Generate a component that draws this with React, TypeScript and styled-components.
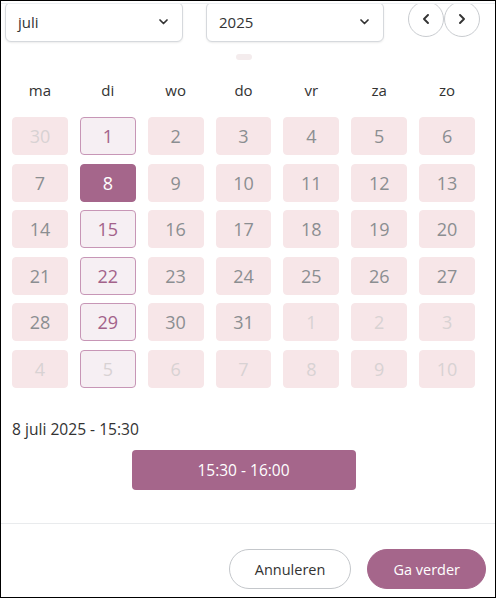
import React from "react";
import styled, { createGlobalStyle } from "styled-components";

const PURPLE = "#a5668b";

const GlobalStyle = createGlobalStyle`
  html, body {
    margin: 0;
    padding: 0;
    background: #ffffff;
  }
  body {
    font-family: "Open Sans", "DejaVu Sans", sans-serif;
    color: #333333;
  }
  * {
    box-sizing: border-box;
  }
`;

const Frame = styled.div`
  width: 496px;
  height: 598px;
  border: 1px solid #000000;
  background: #ffffff;
  display: flex;
  flex-direction: column;
  overflow: hidden;
`;

const TopRule = styled.div`
  flex: 0 0 auto;
  height: 3px;
  border-bottom: 1px solid #eceff2;
  position: relative;
  z-index: 2;
  background: #ffffff;
`;

const Body = styled.div`
  flex: 1;
  overflow: hidden;
`;

const Toolbar = styled.div`
  display: flex;
  align-items: flex-start;
  gap: 23px;
  margin-top: -2px;
  padding: 0 15px 0 4px;
`;

const Select = styled.div`
  width: 178px;
  height: 40px;
  border: 1px solid #d6d9dd;
  border-radius: 6px;
  box-shadow: 0 1px 2px rgba(0, 0, 0, 0.08);
  display: flex;
  align-items: center;
  justify-content: space-between;
  padding: 0 14px 0 12px;
  font-size: 15px;
  color: #333333;
  background: #ffffff;
`;

const NavGroup = styled.div`
  display: flex;
  margin-top: -1px;
  margin-left: 1px;
`;

const NavButton = styled.button`
  width: 36px;
  height: 36px;
  border-radius: 50%;
  border: 1px solid #c9ccd0;
  background: #ffffff;
  display: flex;
  align-items: center;
  justify-content: center;
  padding: 0;
  margin: 0;
  cursor: pointer;
`;

const Content = styled.div`
  padding: 0 20px 0 11px;
`;

const ScrollPill = styled.div`
  width: 16px;
  height: 6px;
  border-radius: 3px;
  background: #f4eced;
  margin: 12px auto 0;
`;

const Weekdays = styled.div`
  display: grid;
  grid-template-columns: repeat(7, 1fr);
  column-gap: 12px;
  margin-top: 19px;
  font-size: 15px;
  line-height: 22px;
  color: #333333;
  text-align: center;
`;

const DayGrid = styled.div`
  display: grid;
  grid-template-columns: repeat(7, 1fr);
  grid-auto-rows: 38px;
  gap: 8.5px 12px;
  margin-top: 16px;
`;

type DayKind = "normal" | "out" | "open" | "openOut" | "selected";

const Day = styled.div<{ $kind: DayKind }>`
  display: flex;
  align-items: center;
  justify-content: center;
  border-radius: 4px;
  font-size: 18px;
  background: ${(p) =>
    p.$kind === "selected"
      ? PURPLE
      : p.$kind === "open" || p.$kind === "openOut"
      ? "#f6eff3"
      : "#f7e6e8"};
  border: 1px solid
    ${(p) =>
      p.$kind === "selected"
        ? PURPLE
        : p.$kind === "open" || p.$kind === "openOut"
        ? "#c796b6"
        : "#f7e6e8"};
  color: ${(p) =>
    p.$kind === "selected"
      ? "#ffffff"
      : p.$kind === "open"
      ? "#a3628a"
      : p.$kind === "out" || p.$kind === "openOut"
      ? "#d8d2d3"
      : "#8b8e91"};
`;

const DateLabel = styled.div`
  margin-top: 30px;
  font-size: 15.6px;
  line-height: 22px;
  color: #333333;
`;

const SlotRow = styled.div`
  display: flex;
  justify-content: center;
  margin-top: 10px;
`;

const Slot = styled.button`
  width: 224px;
  height: 40px;
  border: none;
  border-radius: 4px;
  background: ${PURPLE};
  color: #ffffff;
  font-family: "Open Sans", sans-serif;
  font-size: 15.5px;
  cursor: pointer;
`;

const Footer = styled.div`
  flex: 0 0 auto;
  border-top: 1px solid #e9ebed;
  display: flex;
  justify-content: flex-end;
  gap: 16px;
  padding: 25px 9px 8px 0;
`;

const PillButton = styled.button<{ $primary?: boolean }>`
  height: 40px;
  padding: 0 25px;
  border-radius: 20px;
  border: 1px solid ${(p) => (p.$primary ? PURPLE : "#c4c7cb")};
  background: ${(p) => (p.$primary ? PURPLE : "#ffffff")};
  color: ${(p) => (p.$primary ? "#ffffff" : "#333333")};
  font-family: "Open Sans", sans-serif;
  font-size: 14.5px;
  cursor: pointer;
`;

const ChevronDown = () => (
  <svg width="9" height="6" viewBox="0 0 9 6" fill="none">
    <path d="M1 1l3.5 3.5L8 1" stroke="#333" strokeWidth="1.7" strokeLinecap="round" strokeLinejoin="round" />
  </svg>
);

const Chevron = ({ dir }: { dir: "left" | "right" }) => (
  <svg width="6" height="10" viewBox="0 0 6 10" fill="none">
    <path
      d={dir === "left" ? "M5 1L1 5l4 4" : "M1 1l4 4-4 4"}
      stroke="#333"
      strokeWidth="1.9"
      strokeLinecap="round"
      strokeLinejoin="round"
    />
  </svg>
);

const weekdays = ["ma", "di", "wo", "do", "vr", "za", "zo"];

type Cell = { n: number; kind: DayKind };

const buildDays = (): Cell[] => {
  const cells: Cell[] = [{ n: 30, kind: "out" }];
  for (let d = 1; d <= 31; d++) cells.push({ n: d, kind: "normal" });
  for (let d = 1; d <= 10; d++) cells.push({ n: d, kind: "out" });
  return cells.map((c, i) => {
    if (i % 7 !== 1) return c;
    if (c.n === 8 && c.kind === "normal") return { ...c, kind: "selected" };
    return { ...c, kind: c.kind === "out" ? "openOut" : "open" };
  });
};

const App = () => {
  const days = buildDays();

  return (
    <>
      <GlobalStyle />
      <Frame>
        <TopRule />
        <Body>
          <Toolbar>
            <Select>
              <span>juli</span>
              <ChevronDown />
            </Select>
            <Select>
              <span>2025</span>
              <ChevronDown />
            </Select>
            <NavGroup>
              <NavButton aria-label="vorige maand">
                <Chevron dir="left" />
              </NavButton>
              <NavButton aria-label="volgende maand">
                <Chevron dir="right" />
              </NavButton>
            </NavGroup>
          </Toolbar>
          <Content>
            <ScrollPill />
            <Weekdays>
              {weekdays.map((w) => (
                <div key={w}>{w}</div>
              ))}
            </Weekdays>
            <DayGrid>
              {days.map((d, i) => (
                <Day key={i} $kind={d.kind}>
                  {d.n}
                </Day>
              ))}
            </DayGrid>
            <DateLabel>8 juli 2025 - 15:30</DateLabel>
            <SlotRow>
              <Slot>15:30 - 16:00</Slot>
            </SlotRow>
          </Content>
        </Body>
        <Footer>
          <PillButton>Annuleren</PillButton>
          <PillButton $primary>Ga verder</PillButton>
        </Footer>
      </Frame>
    </>
  );
};

export default App;
